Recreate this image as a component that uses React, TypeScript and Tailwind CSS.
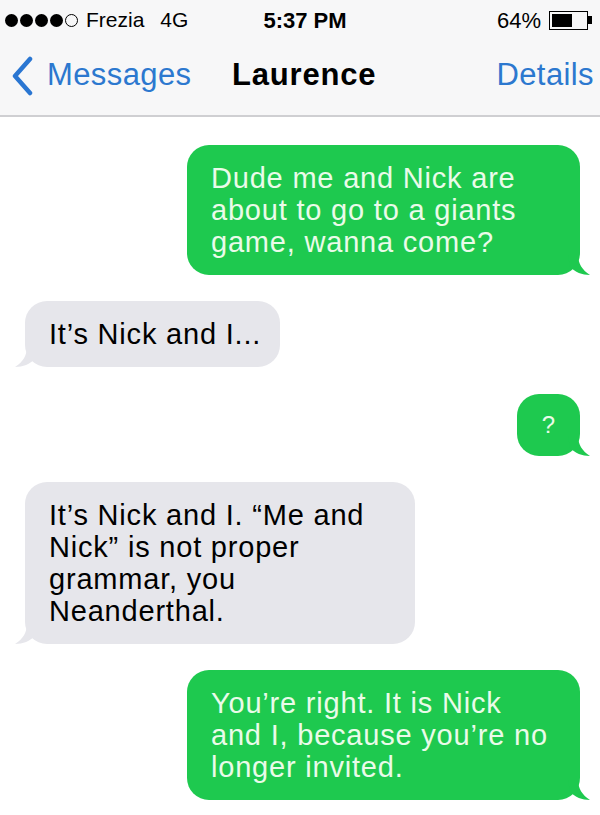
import React from "react";

const font = { fontFamily: '"Liberation Sans", Arial, sans-serif' };

function TailRight({ color }: { color: string }) {
  return (
    <svg className="absolute -right-[10px] bottom-0" width="22" height="20" viewBox="0 0 22 20">
      <path d="M0 0 L10 0 C10 8 14 15 22 20 C14 20 7 17 2 12 Z" fill={color} />
    </svg>
  );
}

function TailLeft({ color }: { color: string }) {
  return (
    <svg className="absolute -left-[10px] bottom-0" width="22" height="20" viewBox="0 0 22 20">
      <path d="M22 0 L12 0 C12 8 8 15 0 20 C8 20 15 17 20 12 Z" fill={color} />
    </svg>
  );
}

function Sent({ lines, className }: { lines: string[]; className?: string }) {
  return (
    <div className="flex justify-end pr-5">
      <div
        className={`relative rounded-[22px] bg-[#1ec94f] text-[#eafbe9] px-6 py-[17px] text-[29px] leading-[32px] tracking-[0.8px] ${className ?? ""}`}
      >
        {lines.map((l, i) => (
          <div key={i} className="whitespace-nowrap">{l}</div>
        ))}
        <TailRight color="#1ec94f" />
      </div>
    </div>
  );
}

function Received({ lines, className }: { lines: string[]; className?: string }) {
  return (
    <div className="flex justify-start pl-[25px]">
      <div
        className={`relative rounded-[22px] bg-[#e6e6eb] text-black px-6 py-[17px] text-[29px] leading-[32px] tracking-[0.8px] ${className ?? ""}`}
      >
        {lines.map((l, i) => (
          <div key={i} className="whitespace-nowrap">{l}</div>
        ))}
        <TailLeft color="#e6e6eb" />
      </div>
    </div>
  );
}

export default function App() {
  return (
    <div className="w-[600px] h-[815px] overflow-hidden bg-white" style={font}>
      <div className="bg-[#f7f7f8] border-b-2 border-[#cfcfd2]">
        <div className="h-[40px] flex items-center px-[5px] text-[21px] text-black">
          <div className="flex items-center gap-[2px] w-[250px]">
            <span className="flex gap-[2px] items-center">
              {[0, 1, 2, 3].map((i) => (
                <span key={i} className="w-[13px] h-[13px] rounded-full bg-black" />
              ))}
              <span className="w-[13px] h-[13px] rounded-full border border-black" />
            </span>
            <span className="ml-[6px]">Frezia</span>
            <span className="ml-[14px]">4G</span>
          </div>
          <div className="font-bold text-[22px] w-[100px] text-center">5:37 PM</div>
          <div className="flex-1 flex items-center justify-end gap-[8px] pr-[3px]">
            <span className="text-[22px]">64%</span>
            <span className="flex items-center">
              <span className="w-[39px] h-[19px] border border-black p-[2px] flex">
                <span className="w-[62%] h-full bg-black" />
              </span>
              <span className="w-[4px] h-[8px] bg-black" />
            </span>
          </div>
        </div>
        <div className="h-[75px] flex items-center pb-[4px] text-[31px] tracking-[0.4px]">
          <div className="flex items-center w-[232px] pl-[10px] text-[#2c78cf]">
            <svg width="24" height="40" viewBox="0 0 24 40">
              <path d="M20 3 L5 20 L20 37" fill="none" stroke="#2a76d2" strokeWidth="4.5" strokeLinecap="round" strokeLinejoin="round" />
            </svg>
            <span className="ml-[13px]">Messages</span>
          </div>
          <div className="font-bold text-black tracking-[0.8px]">Laurence</div>
          <div className="flex-1 text-right pr-[6px] text-[#2c78cf]">Details</div>
        </div>
      </div>

      <div className="flex flex-col pt-[28px] gap-[26px]">
        <Sent className="w-[393px]" lines={["Dude me and Nick are", "about to go to a giants", "game, wanna come?"]} />
        <Received className="w-[255px]" lines={["It’s Nick and I..."]} />
        <div className="flex justify-end pr-5 mt-[1px]">
          <div className="relative w-[63px] h-[62px] rounded-[22px] bg-[#1ec94f] text-[#eafbe9] text-[24px] flex items-center justify-center">
            ?
            <TailRight color="#1ec94f" />
          </div>
        </div>
        <Received className="w-[390px]" lines={["It’s Nick and I. “Me and", "Nick” is not proper", "grammar, you", "Neanderthal."]} />
        <Sent className="w-[393px]" lines={["You’re right. It is Nick", "and I, because you’re no", "longer invited."]} />
      </div>
    </div>
  );
}
